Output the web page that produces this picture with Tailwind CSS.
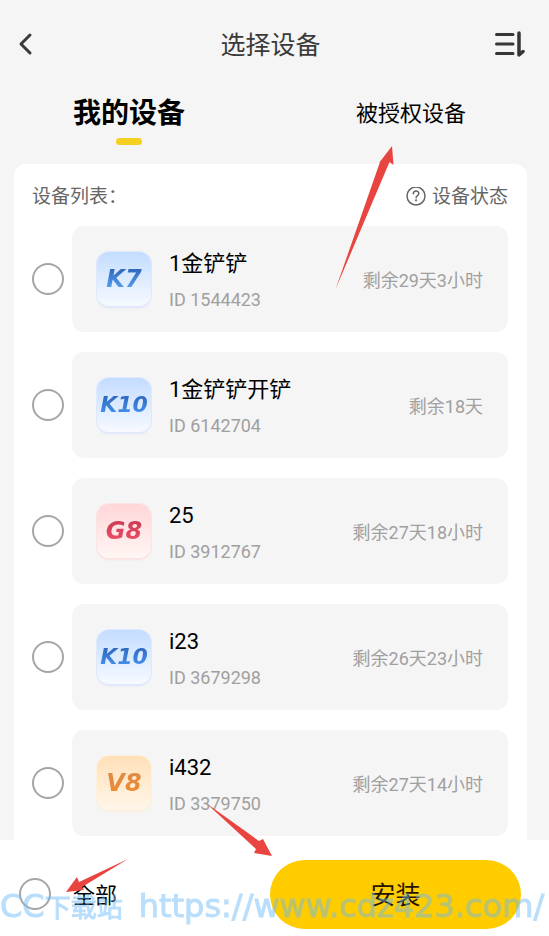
<!DOCTYPE html>
<html lang="zh-CN">
<head>
<meta charset="utf-8">
<meta name="viewport" content="width=device-width, initial-scale=1">
<title>选择设备</title>
<script src="https://cdn.jsdelivr.net/npm/@tailwindcss/browser@4"></script>
</head>
<body class="relative flex min-h-screen flex-col overflow-x-hidden bg-[#f5f5f5] font-[Roboto,'Noto_Sans_CJK_SC',sans-serif] text-black">

<header class="grid h-[88px] grid-cols-[1fr_auto_1fr] items-center pr-6 pl-4">
  <button type="button" aria-label="返回" class="flex w-5 items-center justify-center">
    <svg class="h-6 w-5" viewBox="0 0 20 24" fill="none" stroke="#3a3a3a" stroke-width="3" stroke-linecap="round" stroke-linejoin="round"><path d="M14 3 5 12l9 9"/></svg>
  </button>
  <h1 class="pt-1 text-[25px] leading-9 text-[#3a3a3a]">选择设备</h1>
  <button type="button" aria-label="排序" class="justify-self-end">
    <svg class="h-7 w-8" viewBox="0 0 32 28" fill="none" stroke="#363636" stroke-width="3" stroke-linecap="round" stroke-linejoin="round"><path d="M3.500 4.500H20M3.500 14H20M3.500 23.500H20"/><path stroke-width="3.500" d="M26 3V25L30 21.500"/></svg>
  </button>
</header>

<nav class="flex h-[76px]">
  <a href="#" aria-current="page" class="ml-[73px] flex flex-col items-center gap-1">
    <span class="mt-1.5 text-[28px] leading-10 font-bold">我的设备</span>
    <span class="h-[7px] w-[26px] rounded-full bg-[#f5d020]"></span>
  </a>
  <a href="#" class="mt-2.5 mr-[83px] ml-auto text-[22px] leading-8">被授权设备</a>
</nav>

<main class="mr-[22px] ml-[14px] flex-1 rounded-t-xl bg-white pr-[19px] pb-1 pl-[18px]">
  <div class="flex h-[62px] items-center justify-between pt-1 text-[19px] leading-7 text-[#666]">
    <h2>设备列表：</h2>
    <a href="#" class="flex items-center gap-1.5">
      <svg class="h-5 w-5" viewBox="0 0 20 20" fill="none" stroke="#666" stroke-width="1.500" stroke-linecap="round"><circle cx="10" cy="9" r="9"/><path d="M7.300 6.800C7.300 3.100 12.800 3.300 12.800 6.500 12.800 8.500 10.100 8.700 10.100 10.800"/><circle cx="10.100" cy="13.400" r=".4"/></svg>
      设备状态
    </a>
  </div>
  <ul class="flex flex-col gap-5">
    <li class="flex items-center gap-2">
      <input id="d1" type="radio" name="device" class="h-8 w-8 shrink-0 appearance-none rounded-full border-2 border-[#a6a6a6] checked:border-8">
      <label for="d1" class="flex h-[106px] flex-1 items-center rounded-xl bg-[#f5f5f5] px-[25px]">
        <span class="flex h-[54px] w-[54px] items-center justify-center rounded-xl bg-linear-to-b from-[#c3dcff] to-[#f7faff] shadow-[0_0_0_1px_#dfe9fd,0_2px_2px_#dfe4f8]"><span class="bg-linear-to-b from-[#2b62b8] to-[#5fa6f5] bg-clip-text font-['DejaVu_Sans'] text-[24px] leading-6 font-bold text-transparent italic">K7</span></span>
        <span class="ml-[18px] flex flex-col gap-1 pt-1.5"><span class="text-[22px] leading-8">1金铲铲</span><span class="text-[18px] leading-8 text-[#a0a0a0]">ID 1544423</span></span>
        <span class="ml-auto pt-1 text-[18px] leading-6 text-[#a0a0a0]">剩余29天3小时</span>
      </label>
    </li>
    <li class="flex items-center gap-2">
      <input id="d2" type="radio" name="device" class="h-8 w-8 shrink-0 appearance-none rounded-full border-2 border-[#a6a6a6] checked:border-8">
      <label for="d2" class="flex h-[106px] flex-1 items-center rounded-xl bg-[#f5f5f5] px-[25px]">
        <span class="flex h-[54px] w-[54px] items-center justify-center rounded-xl bg-linear-to-b from-[#c3dcff] to-[#f7faff] shadow-[0_0_0_1px_#dfe9fd,0_2px_2px_#dfe4f8]"><span class="bg-linear-to-b from-[#2b62b8] to-[#4a98f5] bg-clip-text font-['DejaVu_Sans'] text-[22px] leading-6 font-bold text-transparent italic">K10</span></span>
        <span class="ml-[18px] flex flex-col gap-1 pt-1.5"><span class="text-[22px] leading-8">1金铲铲开铲</span><span class="text-[18px] leading-8 text-[#a0a0a0]">ID 6142704</span></span>
        <span class="ml-auto pt-1 text-[18px] leading-6 text-[#a0a0a0]">剩余18天</span>
      </label>
    </li>
    <li class="flex items-center gap-2">
      <input id="d3" type="radio" name="device" class="h-8 w-8 shrink-0 appearance-none rounded-full border-2 border-[#a6a6a6] checked:border-8">
      <label for="d3" class="flex h-[106px] flex-1 items-center rounded-xl bg-[#f5f5f5] px-[25px]">
        <span class="flex h-[54px] w-[54px] items-center justify-center rounded-xl bg-linear-to-b from-[#ffd6d8] to-[#fff6f4] shadow-[0_0_0_1px_#fde4e4,0_2px_2px_#f8e0e0]"><span class="bg-linear-to-b from-[#c93a52] to-[#f0506a] bg-clip-text font-['DejaVu_Sans'] text-[24px] leading-6 font-bold text-transparent italic">G8</span></span>
        <span class="ml-[18px] flex flex-col gap-1 pt-1.5"><span class="text-[22px] leading-8">25</span><span class="text-[18px] leading-8 text-[#a0a0a0]">ID 3912767</span></span>
        <span class="ml-auto pt-1 text-[18px] leading-6 text-[#a0a0a0]">剩余27天18小时</span>
      </label>
    </li>
    <li class="flex items-center gap-2">
      <input id="d4" type="radio" name="device" class="h-8 w-8 shrink-0 appearance-none rounded-full border-2 border-[#a6a6a6] checked:border-8">
      <label for="d4" class="flex h-[106px] flex-1 items-center rounded-xl bg-[#f5f5f5] px-[25px]">
        <span class="flex h-[54px] w-[54px] items-center justify-center rounded-xl bg-linear-to-b from-[#c3dcff] to-[#f7faff] shadow-[0_0_0_1px_#dfe9fd,0_2px_2px_#dfe4f8]"><span class="bg-linear-to-b from-[#2b62b8] to-[#4a98f5] bg-clip-text font-['DejaVu_Sans'] text-[22px] leading-6 font-bold text-transparent italic">K10</span></span>
        <span class="ml-[18px] flex flex-col gap-1 pt-1.5"><span class="text-[22px] leading-8">i23</span><span class="text-[18px] leading-8 text-[#a0a0a0]">ID 3679298</span></span>
        <span class="ml-auto pt-1 text-[18px] leading-6 text-[#a0a0a0]">剩余26天23小时</span>
      </label>
    </li>
    <li class="flex items-center gap-2">
      <input id="d5" type="radio" name="device" class="h-8 w-8 shrink-0 appearance-none rounded-full border-2 border-[#a6a6a6] checked:border-8">
      <label for="d5" class="flex h-[106px] flex-1 items-center rounded-xl bg-[#f5f5f5] px-[25px]">
        <span class="flex h-[54px] w-[54px] items-center justify-center rounded-xl bg-linear-to-b from-[#ffe0b8] to-[#fff6e8] shadow-[0_0_0_1px_#fdf0dc,0_2px_2px_#faf0e0]"><span class="bg-linear-to-b from-[#dc8c48] to-[#f08a2c] bg-clip-text font-['DejaVu_Sans'] text-[24px] leading-6 font-bold text-transparent italic">V8</span></span>
        <span class="ml-[18px] flex flex-col gap-1 pt-1.5"><span class="text-[22px] leading-8">i432</span><span class="text-[18px] leading-8 text-[#a0a0a0]">ID 3379750</span></span>
        <span class="ml-auto pt-1 text-[18px] leading-6 text-[#a0a0a0]">剩余27天14小时</span>
      </label>
    </li>
  </ul>
</main>

<footer class="flex h-24 items-center justify-between bg-white pt-3 pr-7 pl-[19px]">
  <div class="flex items-center gap-[22px]">
    <input id="all" type="checkbox" class="h-8 w-8 appearance-none rounded-full border-2 border-[#a6a6a6] checked:border-8">
    <label for="all" class="pt-1 text-[22px] leading-8">全部</label>
  </div>
  <button type="button" class="h-[69px] w-[251px] rounded-full bg-[#ffcc00] pt-1 text-[25px] leading-9 text-[#251300]">安装</button>
</footer>

<svg class="pointer-events-none absolute top-0 left-0 h-[936px] w-[549px]" viewBox="0 0 549 936" aria-hidden="true" fill="#e94540">
  <path d="M336 288 380.500 160.500 379 163 392 146 393.500 165 389.500 162 336.500 287Z"/>
  <path d="M206 803 259 841 263 839 272 856 254 853 256 849Z"/>
  <path d="M128 859 79 882 77 877 66 892 84 890 82 887Z"/>
</svg>
<p class="pointer-events-none absolute bottom-2 left-0 flex items-baseline gap-4 font-[DejaVu_Sans,'Noto_Sans_CJK_SC',sans-serif] text-[32px] leading-10 whitespace-nowrap text-[#66b8f8] opacity-45 [-webkit-text-stroke:1px_#66b8f8]"><span>CC<span class="text-[26px]">下载站</span></span><span>https://www.cdz423.com/</span></p>
</body>
</html>
